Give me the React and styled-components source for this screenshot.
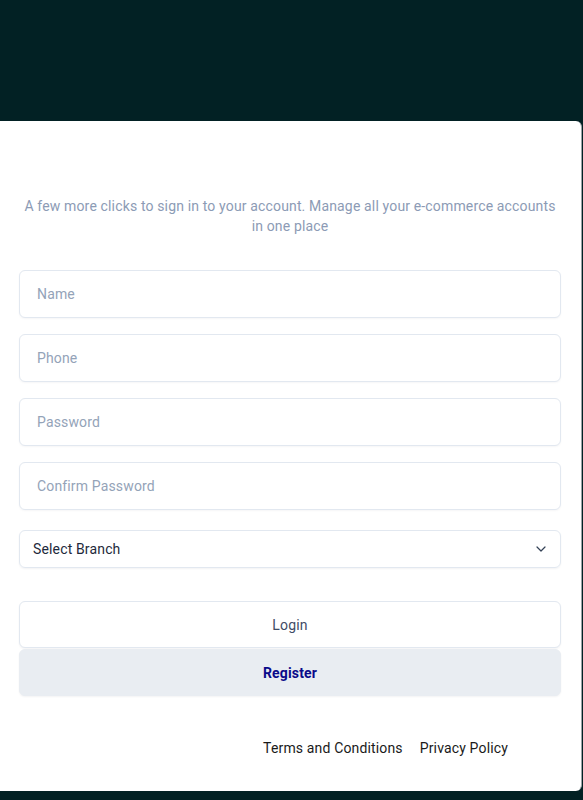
import styled, { createGlobalStyle } from 'styled-components'

const GlobalStyle = createGlobalStyle`
    html, body {
        margin: 0;
        padding: 0;
        background: #022124;
        font-family: Roboto, "Liberation Sans", sans-serif;
    }
`;

const Page = styled.div`
    min-height: 800px;
    padding-top: 121px;
    box-sizing: border-box;
    background: #022124;
`;

const Card = styled.div`
    width: 582px;
    height: 670px;
    box-sizing: border-box;
    background: #fff;
    border-radius: 0 6px 6px 0;
    border-right: 1px solid #9aa3a8;
    padding: 75px 20px 0 19px;
    display: flex;
    flex-direction: column;
    letter-spacing: 0.15px;
`;

const Subtitle = styled.p`
    margin: 0 0 34px;
    text-align: center;
    font-size: 14px;
    line-height: 20px;
    color: #8c9bb5;
`;

const Fields = styled.div`
    display: flex;
    flex-direction: column;
    gap: 16px;
`;

const Input = styled.input`
    height: 48px;
    box-sizing: border-box;
    border: 1px solid #e2e8f0;
    border-radius: 6px;
    padding: 0 17px;
    font-family: inherit;
    font-size: 14px;
    letter-spacing: 0.15px;
    color: #1e293b;
    outline: none;
    box-shadow: 0 1px 2px rgba(15, 23, 42, 0.04);
    &::placeholder {
        color: #94a3b8;
    }
`;

const SelectBox = styled.div`
    margin-top: 20px;
    height: 38px;
    box-sizing: border-box;
    border: 1px solid #e2e8f0;
    border-radius: 6px;
    padding: 0 11px 0 13px;
    display: flex;
    align-items: center;
    justify-content: space-between;
    font-size: 14px;
    color: #1e293b;
    box-shadow: 0 1px 2px rgba(15, 23, 42, 0.05);
`;

const Buttons = styled.div`
    margin-top: 33px;
    display: flex;
    flex-direction: column;
    gap: 1px;
`;

const Button = styled.button`
    height: 47px;
    border-radius: 6px;
    font-family: inherit;
    font-size: 14px;
    letter-spacing: 0.15px;
    cursor: pointer;
    border: 1px solid ${p => (p.$primary ? '#e9edf2' : '#e2e8f0')};
    background: ${p => (p.$primary ? '#e9edf2' : '#fff')};
    color: ${p => (p.$primary ? '#0a0a8a' : '#3f4c66')};
    font-weight: ${p => (p.$primary ? 700 : 400)};
    box-shadow: 0 1px 2px rgba(15, 23, 42, 0.05);
`;

const Footer = styled.div`
    margin-top: 42px;
    display: flex;
    justify-content: flex-end;
    gap: 17px;
    padding-right: 53px;
`;

const FooterLink = styled.a`
    font-size: 14px;
    line-height: 20px;
    color: #1a1a1a;
    text-decoration: none;
`;

function Chevron() {
    return (
        <svg width="16" height="16" viewBox="0 0 24 24" fill="none" stroke="#334155" strokeWidth="1.8" strokeLinecap="round" strokeLinejoin="round">
            <path d="m6 9 6 6 6-6" />
        </svg>
    );
}

export default function App() {
    return (
        <Page>
            <GlobalStyle />
            <Card>
                <Subtitle>
                    A few more clicks to sign in to your account. Manage all your e-commerce accounts in one place
                </Subtitle>
                <Fields>
                    <Input placeholder="Name" />
                    <Input placeholder="Phone" />
                    <Input type="password" placeholder="Password" />
                    <Input type="password" placeholder="Confirm Password" />
                </Fields>
                <SelectBox>
                    <span>Select Branch</span>
                    <Chevron />
                </SelectBox>
                <Buttons>
                    <Button>Login</Button>
                    <Button $primary>Register</Button>
                </Buttons>
                <Footer>
                    <FooterLink href="#">Terms and Conditions</FooterLink>
                    <FooterLink href="#">Privacy Policy</FooterLink>
                </Footer>
            </Card>
        </Page>
    );
}
